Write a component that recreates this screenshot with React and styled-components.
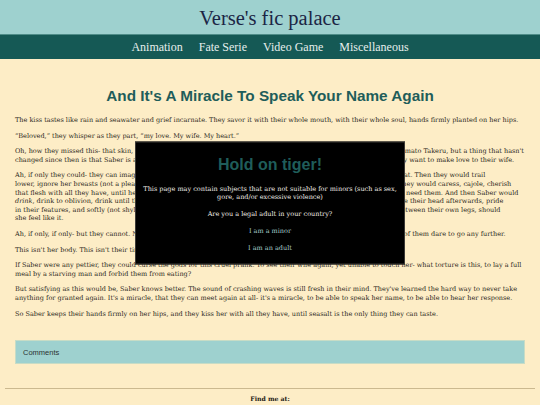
import React from "react";
import styled, { createGlobalStyle } from "styled-components";

const GlobalStyle = createGlobalStyle`
  html, body {
    margin: 0;
    padding: 0;
    background-color: #fdedc6;
  }
  body {
    font-family: "DejaVu Serif", Georgia, serif;
  }
`;

const navLinks = ["Animation", "Fate Serie", "Video Game", "Miscellaneous"];

const App = () => {
  return (
    <Page>
      <GlobalStyle />
      <Header>
        <SiteTitle>Verse's fic palace</SiteTitle>
      </Header>
      <Nav>
        {navLinks.map((link) => (
          <NavLink key={link} href="#">
            {link}
          </NavLink>
        ))}
      </Nav>
      <Main>
        <StoryTitle>And It's A Miracle To Speak Your Name Again</StoryTitle>
        <Story>
          <P>
            The kiss tastes like rain and seawater and grief incarnate. They savor it with their whole mouth, with their whole soul, hands firmly planted on her hips.
          </P>
          <P>“Beloved,” they whisper as they part, “my love. My wife. My heart.”</P>
          <P>
            Oh, how they missed this- that skin, that warmth, that scent. So much has changed since the days they were called Yamato Takeru, but a thing that hasn't
            <br />
            changed since then is that Saber is always, always, completely and utterly desperate whenever the chance comes they want to make love to their wife.
          </P>
          <P>
            Ah, if only they could- they can imagine it so clearly, lips pressed to her jaw, to her neck, to the soft hollow of her throat. Then they would trail
            <br />
            lower, ignore her breasts (not a pleasant thought, but they have waited so very, very long already for this moment). They would caress, cajole, cherish
            <br />
            that flesh with all they have, until her thighs tremble so, and her voice breaks, until she begs them and tells them she need them. And then Saber would
            <br />
            <em>drink</em>, drink to oblivion, drink until they are drunk on naught but her taste, her scent, her sweet voice. They would rise their head afterwards, pride
            <br />
            in their features, and softly (not shyly, never shyly) offer her to take what she wishes, all that is right there, what is between their own legs, should
            <br />
            she feel like it.
          </P>
          <P>
            Ah, if only, if only- but they cannot. Not here, not right now, not in this borrowed body, not like this, not when neither of them dare to go any further.
          </P>
          <P>This isn't her body. This isn't their time.</P>
          <P>
            If Saber were any pettier, they could curse the gods for this cruel prank. To see their wife again, yet unable to touch her- what torture is this, to lay a full
            <br />
            meal by a starving man and forbid them from eating?
          </P>
          <P>
            But satisfying as this would be, Saber knows better. The sound of crashing waves is still fresh in their mind. They've learned the hard way to never take
            <br />
            anything for granted again. It's a miracle, that they can meet again at all- it's a miracle, to be able to speak her name, to be able to hear her response.
          </P>
          <P>
            So Saber keeps their hands firmly on her hips, and they kiss her with all they have, until seasalt is the only thing they can taste.
          </P>
        </Story>
        <Comments>Comments</Comments>
      </Main>
      <Footer>
        <FooterLabel>Find me at:</FooterLabel>
      </Footer>
      <Warning>
        <WarningTitle>Hold on tiger!</WarningTitle>
        <WarningText>
          This page may contain subjects that are not suitable for minors (such as sex,
          <br />
          gore, and/or excessive violence)
        </WarningText>
        <WarningText>Are you a legal adult in your country?</WarningText>
        <Choice href="#">I am a minor</Choice>
        <Choice href="#">I am an adult</Choice>
      </Warning>
    </Page>
  );
};

export default App;

const Page = styled.div`
  min-height: 100vh;
  display: flex;
  flex-direction: column;
`;

const Header = styled.header`
  height: 35px;
  background-color: #9ed1cf;
  display: flex;
  align-items: center;
  justify-content: center;
  border-bottom: 1px solid #4f8d89;
  box-sizing: border-box;
`;

const SiteTitle = styled.h1`
  margin: 2px 0 0;
  font-family: "Liberation Serif", "Times New Roman", serif;
  font-weight: normal;
  font-size: 20.5px;
  color: #1b2545;
`;

const Nav = styled.nav`
  height: 24px;
  background-color: #155955;
  display: flex;
  align-items: center;
  justify-content: center;
  gap: 16px;
`;

const NavLink = styled.a`
  color: #e6efed;
  text-decoration: none;
  font-size: 12px;
  font-family: "Liberation Serif", "Times New Roman", serif;
`;

const Main = styled.main`
  padding: 0 15px;
`;

const StoryTitle = styled.h2`
  margin: 28px 0 11px;
  text-align: center;
  font-family: "Liberation Sans", Arial, sans-serif;
  font-size: 15.3px;
  line-height: 18px;
  color: #1f5d5a;
`;

const Story = styled.div`
  color: #2a2620;
`;

const P = styled.p`
  margin: 0 0 7px;
  font-size: 6.5px;
  line-height: 8.6px;
  white-space: nowrap;
`;

const Comments = styled.div`
  margin-top: 22px;
  height: 24px;
  box-sizing: border-box;
  display: flex;
  align-items: center;
  padding-left: 7px;
  background-color: #9ed1cf;
  border: 1px solid #c7dcc6;
  font-family: "Liberation Sans", Arial, sans-serif;
  font-size: 7.5px;
  color: #2c3432;
`;

const Footer = styled.footer`
  margin: 24px 5px 0;
  border-top: 1px solid #cbb98f;
  display: flex;
  justify-content: center;
  padding-top: 6px;
`;

const FooterLabel = styled.span`
  font-weight: bold;
  font-size: 6.2px;
  color: #1d1a15;
`;

const Warning = styled.div`
  position: fixed;
  left: 50%;
  top: 50%;
  transform: translate(-50%, -50%);
  width: 270px;
  height: 123px;
  box-sizing: border-box;
  background-color: #000;
  border: 1px solid #3c3a36;
  display: flex;
  flex-direction: column;
  align-items: center;
  padding: 13px 2px 0;
`;

const WarningTitle = styled.h3`
  margin: 0 0 11px;
  font-family: "Liberation Sans", Arial, sans-serif;
  font-size: 16px;
  line-height: 18px;
  color: #1f5d5a;
`;

const WarningText = styled.p`
  margin: 0 0 8.5px;
  text-align: center;
  font-size: 6.5px;
  line-height: 8.4px;
  color: #f2efe8;
  white-space: nowrap;
`;

const Choice = styled.a`
  margin-bottom: 8.5px;
  font-size: 6.5px;
  line-height: 8.4px;
  color: #a9cfcc;
  text-decoration: none;
`;
